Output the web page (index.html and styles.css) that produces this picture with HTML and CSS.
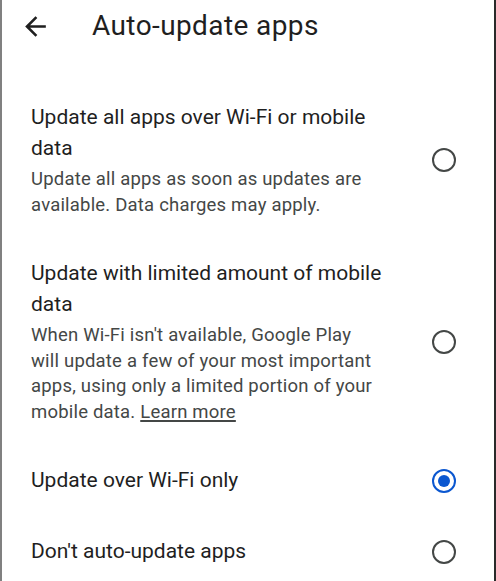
FILE: index.html
```html
<!DOCTYPE html>
<html lang="en">
<head>
<meta charset="utf-8">
<title>Auto-update apps</title>
<link rel="stylesheet" href="styles.css">
</head>
<body>
<div class="screen">
  <header class="appbar">
    <span class="back">
      <svg viewBox="0 0 24 24" width="31" height="31"><path d="M20 11H7.83l5.59-5.59L12 4l-8 8 8 8 1.41-1.41L7.83 13H20v-2z" fill="#1f1f1f"/></svg>
    </span>
    <h1 class="title">Auto-update apps</h1>
  </header>
  <div class="list">
    <div class="item">
      <div class="text">
        <div class="label">Update all apps over Wi-Fi or mobile data</div>
        <div class="desc">Update all apps as soon as updates are available. Data charges may apply.</div>
      </div>
      <span class="radio"></span>
    </div>
    <div class="item">
      <div class="text">
        <div class="label">Update with limited amount of mobile data</div>
        <div class="desc">When Wi-Fi isn't available, Google Play will update a few of your most important apps, using only a limited portion of your mobile data. <span class="link">Learn more</span></div>
      </div>
      <span class="radio"></span>
    </div>
    <div class="item">
      <div class="text">
        <div class="label">Update over Wi-Fi only</div>
      </div>
      <span class="radio checked"></span>
    </div>
    <div class="item">
      <div class="text">
        <div class="label">Don't auto-update apps</div>
      </div>
      <span class="radio"></span>
    </div>
  </div>
</div>
</body>
</html>
```
FILE: styles.css
```css
html, body {
  margin: 0;
  padding: 0;
  background: #ffffff;
}
.screen {
  box-sizing: border-box;
  width: 496px;
  height: 581px;
  overflow: hidden;
  border-left: 2px solid #808080;
  border-right: 2px solid #2a2a2a;
  font-family: Roboto, "Liberation Sans", sans-serif;
  color: #1f1f1f;
}
.appbar {
  display: flex;
  align-items: center;
  height: 52px;
  padding-left: 18px;
}
.back {
  display: flex;
  width: 31px;
  height: 31px;
}
.title {
  margin: 0 0 0 41px;
  font-size: 28px;
  line-height: 52px;
  font-weight: 400;
  letter-spacing: 0.4px;
  color: #1f1f1f;
}
.list {
  padding-top: 30px;
}
.item {
  display: flex;
  align-items: center;
  padding: 20px 0 20px 29px;
}
.text {
  width: 352px;
}
.label {
  font-size: 21px;
  line-height: 31px;
  color: #1f1f1f;
}
.desc {
  margin-top: 3px;
  font-size: 18.5px;
  line-height: 25.5px;
  letter-spacing: 0.2px;
  color: #444746;
}
.link {
  text-decoration: underline;
  text-decoration-thickness: 1.5px;
  text-underline-offset: 2px;
}
.radio {
  box-sizing: border-box;
  margin-left: 49px;
  width: 24px;
  height: 24px;
  border: 2.5px solid #444746;
  border-radius: 50%;
  display: flex;
  align-items: center;
  justify-content: center;
  flex-shrink: 0;
}
.radio.checked {
  border-color: #0b57d0;
}
.radio.checked::after {
  content: "";
  width: 12px;
  height: 12px;
  border-radius: 50%;
  background: #0b57d0;
}
```
